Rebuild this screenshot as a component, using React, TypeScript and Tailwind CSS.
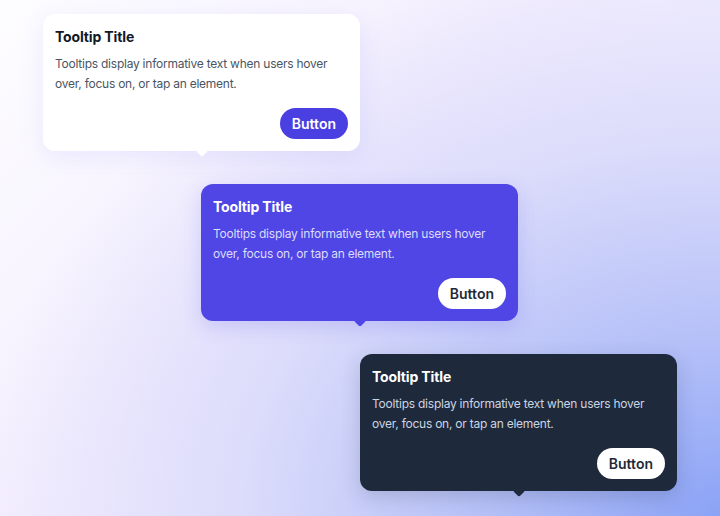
type Tone = 'light' | 'brand' | 'dark';

const tones: Record<Tone, { card: string; title: string; body: string; button: string; arrow: string }> = {
  light: {
    card: 'bg-white shadow-[0_6px_24px_rgba(99,102,241,0.10)]',
    title: 'text-[#111827]',
    body: 'text-[#4b5563]',
    button: 'bg-[#4a3fe0] text-white',
    arrow: 'bg-white',
  },
  brand: {
    card: 'bg-[#4f46e5] shadow-[0_6px_20px_rgba(79,70,229,0.18)]',
    title: 'text-white',
    body: 'text-[#dcdcfb]',
    button: 'bg-white text-[#1f2937]',
    arrow: 'bg-[#4f46e5]',
  },
  dark: {
    card: 'bg-[#1e293b] shadow-[0_6px_20px_rgba(30,41,59,0.18)]',
    title: 'text-white',
    body: 'text-[#cbd5e1]',
    button: 'bg-white text-[#1f2937]',
    arrow: 'bg-[#1e293b]',
  },
};

function Tooltip({ tone, offset }: { tone: Tone; offset: string }) {
  const t = tones[tone];
  return (
    <div className={`relative w-[317px] rounded-[12px] px-3 pt-[13px] pb-[12px] ${t.card} ${offset}`}>
      <h3 className={`text-[14px] leading-5 font-bold tracking-[-0.01em] ${t.title}`}>Tooltip Title</h3>
      <p className={`mt-[7px] text-[12px] leading-5 tracking-[-0.02em] ${t.body}`}>
        Tooltips display informative text when users hover over, focus on, or tap an element.
      </p>
      <div className="mt-[14px] flex justify-end">
        <button className={`h-[31px] rounded-full px-3 text-[14px] font-semibold ${t.button}`}>Button</button>
      </div>
      <span
        className={`absolute left-1/2 -bottom-[4px] h-[9px] w-[9px] -translate-x-1/2 rotate-45 rounded-[2px] ${t.arrow}`}
      />
    </div>
  );
}

export default function App() {
  return (
    <div
      className="h-[516px] w-[720px] overflow-hidden bg-[radial-gradient(ellipse_115%_125%_at_100%_100%,#8ba3f6_0%,#b6c1f8_28%,#dcdcfb_58%,rgba(236,234,254,0)_90%),linear-gradient(135deg,#fdfdff_0%,#f4eefe_45%,#eef0fe_100%)] font-['Inter',sans-serif]"
    >
      <div className="flex flex-col gap-[33px] pt-[14px]">
        <Tooltip tone="light" offset="ml-[43px]" />
        <Tooltip tone="brand" offset="ml-[201px]" />
        <Tooltip tone="dark" offset="ml-[360px]" />
      </div>
    </div>
  );
}
